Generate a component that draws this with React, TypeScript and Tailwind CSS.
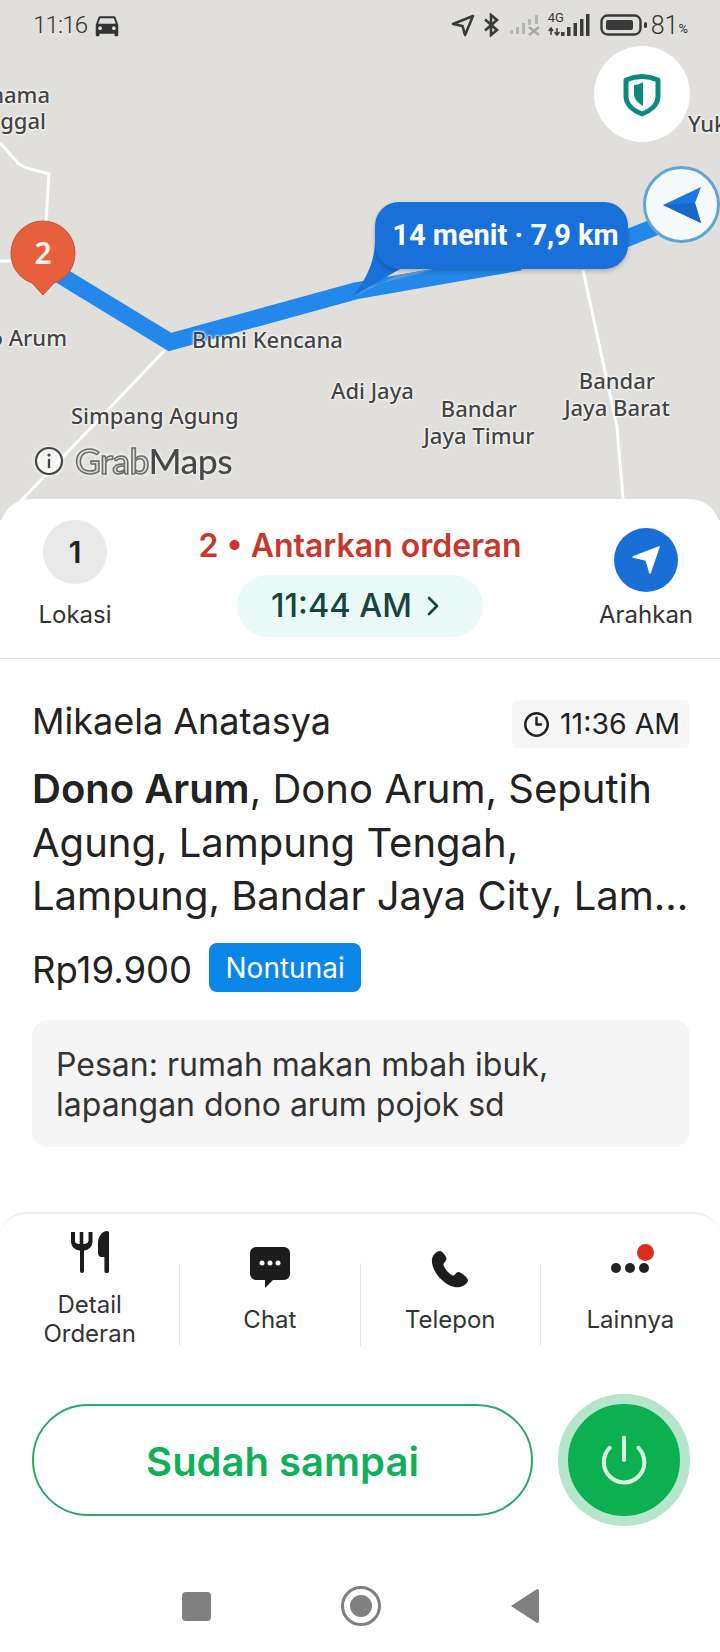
import { MdDirectionsCar } from "react-icons/md";
import { ChevronRight, Clock3, Power } from "lucide-react";

const labelClass =
  "absolute font-['Noto_Sans',sans-serif] font-medium text-[22px] leading-[27px] text-[#444] whitespace-nowrap [text-shadow:0_0_3px_#fff,0_0_3px_#fff,0_0_2px_#fff]";

function StatusIcons() {
  return (
    <div className="flex items-center text-[#3a3a3a]">
      {/* location arrow */}
      <svg width="24" height="24" viewBox="0 0 24 24" className="mr-[8px]" fill="none" stroke="#3a3a3a" strokeWidth="2.6" strokeLinejoin="round">
        <path d="M2 11 22 3 14 22 11.5 13Z" />
      </svg>
      {/* bluetooth */}
      <svg width="17" height="24" viewBox="0 0 17 24" className="mr-[10px]" fill="none" stroke="#3a3a3a" strokeWidth="2.6">
        <path d="M2 6.5 14 17 8 22V2l6 5L2 17.5" />
      </svg>
      {/* sim 1, no service */}
      <svg width="31" height="22" viewBox="0 0 31 22" className="mr-[7px]">
        <rect x="0" y="16" width="3" height="4" fill="#b5b5b5" />
        <rect x="6" y="13" width="3" height="7" fill="#b5b5b5" />
        <rect x="12" y="9" width="3" height="11" fill="#b5b5b5" />
        <rect x="18" y="5" width="3" height="6" fill="#b5b5b5" />
        <rect x="25" y="1" width="3" height="9" fill="#b5b5b5" />
        <path d="M19 13l10 8M29 13l-10 8" stroke="#a8a8a8" strokeWidth="2.4" />
      </svg>
      {/* 4G signal */}
      <div className="relative w-[42px] h-[24px] mr-[10px]">
        <span className="absolute left-0 top-[-2px] font-['Roboto',sans-serif] text-[13px] leading-[14px] text-[#3a3a3a]">4G</span>
        <svg width="42" height="24" viewBox="0 0 42 24" className="absolute inset-0">
          <path d="M3 15v7M0.5 18 3 15l2 3M9 22v-7M6.5 19 9 22l2.500-3" stroke="#3a3a3a" strokeWidth="1.500" fill="none" />
          <rect x="13" y="19" width="3.500" height="4" fill="#3a3a3a" />
          <rect x="19" y="14" width="3.500" height="9" fill="#3a3a3a" />
          <rect x="25.500" y="10" width="3.500" height="13" fill="#3a3a3a" />
          <rect x="32" y="6" width="3.500" height="17" fill="#3a3a3a" />
          <rect x="38" y="1" width="3.500" height="22" fill="#3a3a3a" />
        </svg>
      </div>
      {/* battery */}
      <svg width="48" height="24" viewBox="0 0 48 24" className="mr-[3px]">
        <rect x="1.500" y="2.500" width="39" height="19" rx="6" fill="none" stroke="#3a3a3a" strokeWidth="2.400" />
        <rect x="6" y="7" width="27" height="10" rx="2" fill="#3a3a3a" />
        <rect x="44" y="9" width="3" height="6" rx="1.500" fill="#3a3a3a" />
      </svg>
      <span className="font-['Roboto',sans-serif] font-light text-[25px] leading-none text-[#333]">81</span>
      <span className="font-['Roboto',sans-serif] text-[13px] leading-none text-[#333] mt-[6px]">%</span>
    </div>
  );
}

function MapArea() {
  return (
    <div className="relative h-[520px] bg-[#e0dfdc] overflow-hidden">
      {/* roads and route */}
      <svg width="720" height="520" viewBox="0 0 720 520" className="absolute inset-0">
        <g fill="none" stroke="#ffffff" strokeWidth="3">
          <path d="M0 143 18 163C25 170 38 170 49 174L46 222" />
          <path d="M0 261H16" />
          <path d="M165 350 20 502" />
          <path d="M583 270 617 427 624 510" />
        </g>
        <path d="M60 275 170 342 355 291 520 262" fill="none" stroke="#2388ea" strokeWidth="17" strokeLinejoin="miter" />
        <path d="M610 245 660 225" fill="none" stroke="#2388ea" strokeWidth="17" />
        <path d="M353 297 398 275 440 268 360 289Z" fill="#5b97d8" />
        {/* bubble tail */}
        <path d="M375 240C375 262 366 280 352 297L400 269Z" fill="#1a70d9" />
      </svg>

      {/* destination pin */}
      <svg width="66" height="76" viewBox="0 0 66 76" className="absolute left-[10px] top-[220px]">
        <path d="M33 75 22 63C8 58 1 46 1 33a32 32 0 0 1 64 0c0 13-7 25-21 30Z" fill="#e6603e" stroke="#c9503a" strokeWidth="1" />
      </svg>
      <span className="absolute left-[10px] top-[220px] w-[66px] h-[64px] flex items-center justify-center font-['Noto_Sans',sans-serif] font-semibold text-[30px] text-[#fdf1ec]">2</span>

      {/* map labels */}
      <span className={`${labelClass} right-[670px] top-[81px]`}>nama</span>
      <span className={`${labelClass} right-[674px] top-[107px]`}>ggal</span>
      <span className={`${labelClass} left-[688px] top-[110px]`}>Yuk</span>
      <span className={`${labelClass} right-[653px] top-[324px]`}>o Arum</span>
      <span className={`${labelClass} left-[192px] top-[326px]`}>Bumi Kencana</span>
      <span className={`${labelClass} left-[71px] top-[402px]`}>Simpang Agung</span>
      <span className={`${labelClass} left-[331px] top-[377px]`}>Adi Jaya</span>
      <span className={`${labelClass} left-[420px] top-[395px] w-[118px] text-center`}>
        Bandar
        <br />
        Jaya Timur
      </span>
      <span className={`${labelClass} left-[558px] top-[367px] w-[118px] text-center`}>
        Bandar
        <br />
        Jaya Barat
      </span>

      {/* GrabMaps logo */}
      <div className="absolute left-[34px] top-[440px] flex items-center gap-[11px] [filter:drop-shadow(0_0_2px_#fff)]">
        <svg width="30" height="30" viewBox="0 0 30 30" fill="none">
          <circle cx="15" cy="15" r="13" fill="#ffffff66" stroke="#444" strokeWidth="2.200" />
          <path d="M15 13v9" stroke="#444" strokeWidth="2.400" />
          <circle cx="15" cy="9" r="1.600" fill="#444" />
        </svg>
        <span className="font-['Lato',sans-serif] font-medium text-[35.5px] leading-[42px] text-[#484848] tracking-[-0.5px]">
          <span className="text-[#dddcd9] [-webkit-text-stroke:1.6px_#6b6b6b]">Grab</span>Maps
        </span>
      </div>

      {/* safety shield */}
      <div className="absolute left-[594px] top-[46px] w-[96px] h-[96px] rounded-full bg-white flex items-center justify-center">
        <svg width="38" height="45" viewBox="0 0 38 45">
          <path d="M3 8Q19 1 35 8V24C35 33 27 39 19 42 11 39 3 33 3 24Z" fill="#fff" stroke="#0d8a80" strokeWidth="5" strokeLinejoin="round" />
          <path d="M11 13C14 13 17 12 20 10V34C15 31 11 27 11 22Z" fill="#0d8a80" />
        </svg>
      </div>

      {/* driver position */}
      <div className="absolute left-[643px] top-[166px] w-[77px] h-[77px] rounded-full bg-[#f7fafc] border-[3px] border-[#5fa6d6] flex items-center justify-center">
        <svg width="38" height="36" viewBox="0 0 38 36">
          <path d="M0 18 38 0 32 16 38 36Z" fill="#1b78e0" />
          <path d="M32 16 38 36 0 18Z" fill="#1669c8" />
        </svg>
      </div>

      {/* eta bubble */}
      <div className="absolute left-[375px] top-[202px] w-[253px] h-[67px] rounded-[24px] bg-[#1a70d9] flex items-center justify-center pl-[8px] shadow-[0_2px_4px_rgba(0,0,0,0.25)]">
        <span className="font-['Roboto',sans-serif] font-bold text-[29px] text-white whitespace-nowrap">14 menit · 7,9 km</span>
      </div>

      {/* status bar */}
      <div className="relative flex items-center justify-between h-[50px] pl-[33px] pr-[32px]">
        <div className="flex items-center gap-[5px]">
          <span className="font-['Roboto',sans-serif] font-light text-[24px] leading-none text-[#333] tracking-[-0.8px]">11:16</span>
          <MdDirectionsCar className="text-[#333] text-[30px]" />
        </div>
        <StatusIcons />
      </div>
    </div>
  );
}

function ActionItem(props: { icon: React.ReactNode; label: React.ReactNode; bottom: string }) {
  return (
    <div className={`flex-1 flex flex-col items-center justify-end gap-[17px] ${props.bottom}`}>
      <div className="flex justify-center">{props.icon}</div>
      <div className="text-center text-[24px] leading-[29px] text-[#333]">{props.label}</div>
    </div>
  );
}

export default function App() {
  return (
    <div className="w-[720px] h-[1652px] bg-white overflow-hidden font-['Inter',sans-serif] text-[#222]">
      <MapArea />

      {/* ================= TRIP HEADER ================= */}
      <div className="relative -mt-[21px] bg-white rounded-t-[30px] h-[160px] border-b border-[#e6e6e6] flex">
        <div className="w-[150px] flex flex-col items-center pt-[21px]">
          <div className="w-[64px] h-[64px] rounded-full bg-[#e9e9e9] flex items-center justify-center font-semibold text-[30px] text-[#222]">1</div>
          <span className="mt-[16px] text-[24px] leading-[29px] text-[#333]">Lokasi</span>
        </div>
        <div className="flex-1 flex flex-col items-center pt-[28px]">
          <span className="font-semibold text-[32px] leading-[38px] text-[#c9372c] whitespace-nowrap">2 • Antarkan orderan</span>
          <div className="mt-[10px] w-[246px] h-[62px] rounded-full bg-[#eafaf9] flex items-center justify-center gap-[5px]">
            <span className="font-medium text-[32.5px] text-[#17453e]">11:44 AM</span>
            <ChevronRight className="text-[#17453e]" size={32} strokeWidth={2} />
          </div>
        </div>
        <div className="w-[150px] flex flex-col items-center pt-[29px] pl-[2px]">
          <div className="w-[64px] h-[64px] rounded-full bg-[#196fd6] flex items-center justify-center">
            <svg width="30" height="30" viewBox="0 0 30 30">
              <path d="M2 12 28 2 19 28 15 15Z" fill="#fff" stroke="#fff" strokeWidth="1.500" strokeLinejoin="round" />
            </svg>
          </div>
          <span className="mt-[8px] text-[24px] leading-[29px] text-[#333]">Arahkan</span>
        </div>
      </div>

      {/* ================= ORDER DETAIL ================= */}
      <div className="h-[553px] pl-[32px] pr-[30px] pt-[41px]">
        <div className="flex items-center justify-between h-[48px]">
          <span className="text-[36px] leading-[44px] -mt-[7px] text-[#222]">Mikaela Anatasya</span>
          <div className="flex items-center gap-[10px] h-[48px] w-[178px] pl-[11px] bg-[#f6f6f6] rounded-[6px]">
            <Clock3 className="text-[#222]" size={27} strokeWidth={2.2} />
            <span className="text-[28.5px] text-[#222] whitespace-nowrap">11:36 AM</span>
          </div>
        </div>

        <p className="mt-[14px] text-[40px] leading-[53.5px] text-[#222] whitespace-nowrap">
          <b className="font-semibold">Dono Arum</b>, Dono Arum, Seputih
          <br />
          Agung, Lampung Tengah,
          <br />
          Lampung, Bandar Jaya City, Lam...
        </p>

        <div className="mt-[20px] flex items-center gap-[17px] h-[50px]">
          <span className="mt-[5px] text-[36.5px] leading-[44px] text-[#222]">Rp19.900</span>
          <span className="w-[152px] h-[49px] rounded-[8px] bg-[#0a85e8] flex items-center justify-center text-[28px] text-white">Nontunai</span>
        </div>

        <div className="mt-[27px] h-[127px] rounded-[16px] bg-[#f5f5f5] px-[24px] pt-[25px] text-[32px] leading-[40px] text-[#333] whitespace-nowrap">
          Pesan: rumah makan mbah ibuk,
          <br />
          lapangan dono arum pojok sd
        </div>
      </div>

      {/* ================= ACTIONS ================= */}
      <div className="rounded-t-[26px] border-t-2 border-[#ececec] bg-white">
        <div className="flex h-[135px]">
          <ActionItem
            bottom="pb-[1px]"
            label={
              <>
                Detail
                <br />
                Orderan
              </>
            }
            icon={
              <svg width="38" height="42" viewBox="0 0 38 42" fill="#1c1c1c">
                <path d="M0 1h4v9q0 3 4.700 3V1h3.600v12q4.700 0 5.200-3V1h4v9c0 6-4 9-8.500 9.500V40a2 2 0 0 1-4 0V19.500C4 19 0 16 0 10Z" />
                <path d="M38 1.500V40a2.300 2.300 0 0 1-4.600 0V26H31c-3 0-4-2-4-5V12C27 6 31 0 36 0a2 2 0 0 1 2 1.500Z" />
              </svg>
            }
          />
          <div className="w-px h-[83px] mt-[49px] bg-[#e8e8e8]" />
          <ActionItem
            bottom="pb-[15px]"
            label="Chat"
            icon={
              <svg width="40" height="41" viewBox="0 0 40 41">
                <path d="M6 0h28a6 6 0 0 1 6 6v21a6 6 0 0 1-6 6H23l-8 8v-8H6a6 6 0 0 1-6-6V6a6 6 0 0 1 6-6Z" fill="#1c1c1c" />
                <circle cx="12" cy="16" r="2.500" fill="#fff" />
                <circle cx="20" cy="16" r="2.500" fill="#fff" />
                <circle cx="28" cy="16" r="2.500" fill="#fff" />
              </svg>
            }
          />
          <div className="w-px h-[83px] mt-[49px] bg-[#e8e8e8]" />
          <ActionItem
            bottom="pb-[15px]"
            label="Telepon"
            icon={
              <svg width="38" height="38" viewBox="0 0 38 38" fill="#1c1c1c">
                <path d="M9 1C6 1 2 4 1 9 0 16 5 25 11 30c6 6 13 8 18 7 4-1 8-4 8-7 0-2-7-8-9.500-8-2.500 0-3.500 4-6 3.500C18 24 13 18 12.500 15c-.5-2 3-4 3-6C15.500 6 11 1 9 1Z" />
              </svg>
            }
          />
          <div className="w-px h-[83px] mt-[49px] bg-[#e8e8e8]" />
          <ActionItem
            bottom="pb-[15px]"
            label="Lainnya"
            icon={
              <div className="relative w-[38px] h-[40px] flex items-end justify-between pb-[15px]">
                <span className="w-[10px] h-[10px] rounded-full bg-[#222]" />
                <span className="w-[10px] h-[10px] rounded-full bg-[#222]" />
                <span className="w-[10px] h-[10px] rounded-full bg-[#222]" />
                <span className="absolute right-[-5px] top-[-4px] w-[17px] h-[17px] rounded-full bg-[#d92d20]" />
              </div>
            }
          />
        </div>

        <div className="mt-[45px] pl-[32px] pr-[30px] flex items-center justify-between">
          <button className="w-[501px] h-[112px] pt-[4px] rounded-full border-2 border-[#2aa76a] flex items-center justify-center font-semibold text-[40px] text-[#10b05a]">
            Sudah sampai
          </button>
          <div className="w-[132px] h-[132px] rounded-full bg-[#0cb050] border-[10px] border-[#b5e5ca] flex items-center justify-center">
            <Power className="text-[#d8f5e4]" size={54} strokeWidth={1.8} />
          </div>
        </div>

        {/* android nav */}
        <div className="mt-[60px] flex items-center justify-center gap-[130px] h-[40px]">
          <span className="w-[29px] h-[29px] rounded-[4px] bg-[#808080]" />
          <span className="w-[40px] h-[40px] rounded-full border-[3px] border-[#808080] flex items-center justify-center">
            <span className="w-[22px] h-[22px] rounded-full bg-[#808080]" />
          </span>
          <svg width="28" height="34" viewBox="0 0 28 34">
            <path d="M0 17 26 0a2 2 0 0 1 2 2v30a2 2 0 0 1-2 2Z" fill="#808080" />
          </svg>
        </div>
      </div>
    </div>
  );
}
